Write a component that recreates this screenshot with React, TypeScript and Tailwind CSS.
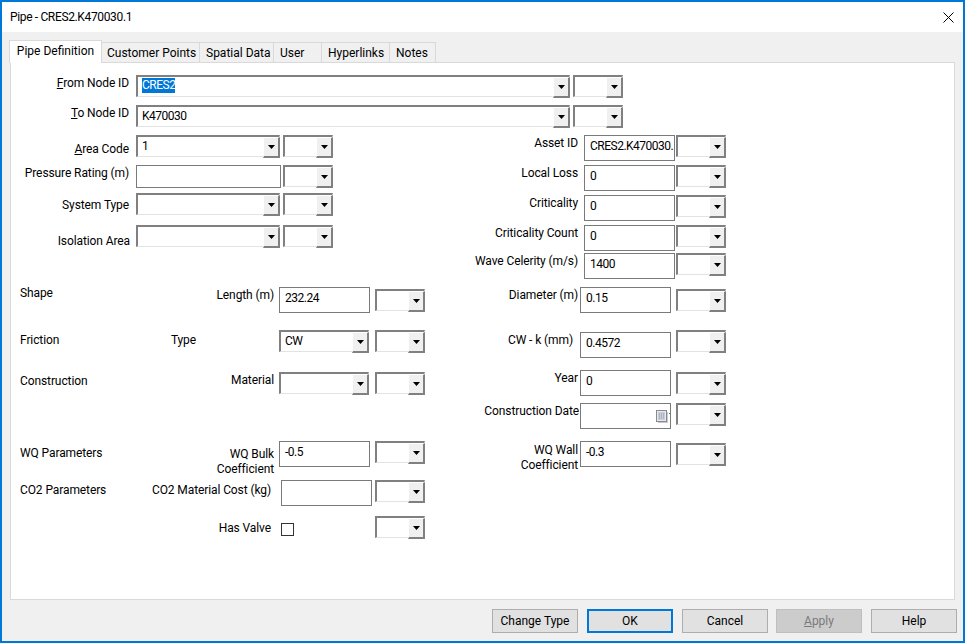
import React from 'react';

const arrow = (
  <svg width="7" height="4" viewBox="0 0 7 4" className="block">
    <path d="M0 0h7L3.500 4z" fill="#000" />
  </svg>
);

// sunken combo box, old win32 look
const Combo: React.FC<{ w: string; value?: string; selected?: boolean; className?: string }> = ({ w, value, selected, className }) => (
  <div className={`flex h-[22px] shrink-0 border-t-2 border-l-2 border-t-[#808080] border-l-[#808080] border-r border-b border-r-[#e3e3e3] border-b-[#e3e3e3] bg-white ${w} ${className ?? ''}`}>
    <div className={`min-w-0 flex-1 overflow-hidden whitespace-nowrap pl-[4px] leading-[15px] tracking-[-0.5px] ${selected ? 'pt-px' : 'pt-[2px]'}`}>
      {selected ? <span className="inline-block bg-[#0078d7] text-white">{value}</span> : value}
    </div>
    <div className="-mb-px -mr-px flex h-[21px] w-[17px] items-center justify-center border-t border-l border-t-white border-l-white border-r-2 border-b-2 border-r-[#808080] border-b-[#808080] bg-[#f0f0f0]">
      {arrow}
    </div>
  </div>
);

const Input: React.FC<{ w?: string; h?: string; value?: string; className?: string; children?: React.ReactNode }> = ({ w = 'w-[91px]', h = 'h-[26px]', value, className, children }) => (
  <div className={`relative shrink-0 overflow-hidden whitespace-nowrap border border-[#7a7a7a] bg-white pl-[5px] pt-[2px] leading-[16px] tracking-[-0.5px] ${w} ${h} ${className ?? ''}`}>
    {value}
    {children}
  </div>
);

const Small: React.FC<{ className?: string }> = ({ className }) => <Combo w="w-[50px]" className={className} />;

const Label: React.FC<{ w: string; className?: string; children: React.ReactNode }> = ({ w, className, children }) => (
  <div className={`shrink-0 pt-px text-right leading-[15px] tracking-[-0.1px] ${w} ${className ?? ''}`}>{children}</div>
);

const Section: React.FC<{ className?: string; children: React.ReactNode }> = ({ className, children }) => (
  <div className={`w-[110px] shrink-0 pl-[9px] pt-px leading-[15px] tracking-[-0.1px] ${className ?? ''}`}>{children}</div>
);

const CalendarIcon = () => (
  <svg width="14" height="13" viewBox="0 0 14 13" className="absolute right-0 top-[6px]">
    <rect x="0.500" y="0.500" width="10" height="11" fill="#e8e8ee" stroke="#8a8a8a" />
    <path d="M2 3h7M2 5h7M2 7h7M2 9h7M3.500 3v6M5.500 3v6M7.500 3v6" stroke="#a9b4c4" strokeWidth="1" />
    <path d="M11.500 2v10.500H2" stroke="#c8c8c8" fill="none" />
    <rect x="13" y="3" width="1" height="1" fill="#3b6ea5" />
  </svg>
);

const tabs = [
  { name: 'Customer Points', cls: 'w-[98px] pl-[5px]' },
  { name: 'Spatial Data', cls: 'w-[74px] pl-[6px]' },
  { name: 'User', cls: 'w-[48px] pl-[6px]' },
  { name: 'Hyperlinks', cls: 'w-[68px] pl-[6px]' },
  { name: 'Notes', cls: 'w-[46px] pl-[6px]' },
];

const btn = 'h-[24px] w-[86px] border border-[#adadad] bg-[#e1e1e1] text-center leading-[22px]';

export default function App() {
  return (
    <div className="flex h-[643px] w-[965px] flex-col overflow-hidden border-2 border-[#0078d7] bg-[#f0f0f0] font-['Roboto',sans-serif] text-[12px] text-black">
      <div className="flex h-[30px] shrink-0 items-center justify-between bg-white pl-2 pr-[9px]">
        <span className="tracking-[-0.35px]">Pipe - CRES2.K470030.1</span>
        <svg width="11" height="11" viewBox="0 0 11 11"><path d="M.5.5l10 10M10.500.5l-10 10" stroke="#000" fill="none" /></svg>
      </div>

      {/* tabs */}
      <div className="ml-[7px] mt-[8px] flex h-[22px] shrink-0 items-end">
        <div className="relative z-10 -mb-px h-[23px] w-[93px] border-x border-t border-[#d9d9d9] bg-white pt-px text-center">Pipe Definition</div>
        {tabs.map((t) => (
          <div key={t.name} className={`h-[20px] border-t border-r border-[#d9d9d9] pt-px leading-[18px] ${t.cls}`}>{t.name}</div>
        ))}
      </div>

      {/* panel */}
      <div className="mx-2 h-[538px] shrink-0 border border-[#d9d9d9] bg-white pt-3">
        <div className="flex">
          <Label w="w-[118px]" className="mr-[7px]"><u>F</u>rom Node ID</Label>
          <Combo w="w-[434px]" value="CRES2" selected />
          <Small className="ml-[3px]" />
        </div>
        <div className="mt-2 flex">
          <Label w="w-[118px]" className="mr-[7px]"><u>T</u>o Node ID</Label>
          <Combo w="w-[434px]" value="K470030" />
          <Small className="ml-[3px]" />
        </div>

        <div className="mt-2 flex">
          {/* left column */}
          <div className="w-[459px] shrink-0">
            <div className="flex h-[22px]">
              <Label w="w-[118px]" className="mr-[7px] mt-[6px]"><u>A</u>rea Code</Label>
              <Combo w="w-[144px]" value="1" />
              <Small className="ml-[3px]" />
            </div>
            <div className="mt-2 flex h-[20px]">
              <Label w="w-[118px]" className="mr-[7px]">Pressure Rating (m)</Label>
              <Input w="w-[145px]" h="h-[23px]" />
              <Small className="ml-[2px]" />
            </div>
            <div className="mt-2 flex h-[22px]">
              <Label w="w-[118px]" className="mr-[7px] mt-[4px]">System Type</Label>
              <Combo w="w-[144px]" />
              <Small className="ml-[3px]" />
            </div>
            <div className="mt-[10px] flex h-[22px]">
              <Label w="w-[119px]" className="mr-[6px] mt-[8px]">Isolation Area</Label>
              <Combo w="w-[144px]" />
              <Small className="ml-[3px]" />
            </div>

            <div className="mt-[40px] flex h-[26px]">
              <Section className="-mt-[2px]">Shape</Section>
              <Label w="w-[153px]" className="mr-[5px]">Length (m)</Label>
              <Input value="232.24" />
              <Small className="ml-[5px] mt-[2px]" />
            </div>
            <div className="mt-[17px] flex h-[22px]">
              <Section className="mt-[2px]">Friction</Section>
              <Label w="w-[75px]" className="mr-[83px] mt-[2px]">Type</Label>
              <Combo w="w-[90px]" value="CW" />
              <Small className="ml-[6px]" />
            </div>
            <div className="mt-[20px] flex h-[22px]">
              <Section className="mt-[1px]">Construction</Section>
              <Label w="w-[153px]" className="mr-[5px]">Material</Label>
              <Combo w="w-[90px]" />
              <Small className="ml-[6px]" />
            </div>
            <div className="mt-[47px] flex h-[26px]">
              <Section className="mt-[4px]">WQ Parameters</Section>
              <Label w="w-[153px]" className="mr-[5px] mt-[5px]">WQ Bulk<br />Coefficient</Label>
              <Input value="-0.5" />
              <Small className="ml-[5px]" />
            </div>
            <div className="mt-[13px] flex h-[26px]">
              <Section className="mt-[2px]">CO2 Parameters</Section>
              <Label w="w-[150px]" className="mr-[10px] mt-[2px]">CO2 Material Cost (kg)</Label>
              <Input />
              <Small className="ml-[3px]" />
            </div>
            <div className="mt-[10px] flex h-[22px]">
              <Label w="w-[260px]" className="mr-[10px] mt-[4px]">Has Valve</Label>
              <div className="mt-[7px] h-[13px] w-[13px] shrink-0 border border-[#333] bg-white" />
              <Small className="ml-[81px]" />
            </div>
          </div>

          {/* right column */}
          <div className="w-[300px] shrink-0">
            <div className="flex h-[26px]">
              <Label w="w-[108px]" className="mr-[6px]">Asset ID</Label>
              <Input value="CRES2.K470030." />
              <Small className="ml-px" />
            </div>
            <div className="mt-1 flex h-[26px]">
              <Label w="w-[108px]" className="mr-[6px]">Local Loss</Label>
              <Input value="0" />
              <Small className="ml-px" />
            </div>
            <div className="mt-1 flex h-[26px]">
              <Label w="w-[108px]" className="mr-[6px]">Criticality</Label>
              <Input value="0" />
              <Small className="ml-px" />
            </div>
            <div className="mt-1 flex h-[26px]">
              <Label w="w-[108px]" className="mr-[6px]">Criticality Count</Label>
              <Input value="0" />
              <Small className="ml-px" />
            </div>
            <div className="mt-[2px] flex h-[26px]">
              <Label w="w-[108px]" className="mr-[6px]">Wave Celerity (m/s)</Label>
              <Input value="1400" />
              <Small className="ml-px" />
            </div>

            <div className="mt-2 flex h-[26px]">
              <Label w="w-[108px]" className="mr-[2px]">Diameter (m)</Label>
              <Input value="0.15" />
              <Small className="ml-[5px] mt-[2px]" />
            </div>
            <div className="mt-[17px] flex h-[28px]">
              <Label w="w-[103px]" className="mr-[7px] mt-[2px]">CW - k (mm)</Label>
              <Input value="0.4572" className="mt-[2px]" />
              <Small className="ml-[5px]" />
            </div>
            <div className="mt-[12px] flex h-[26px]">
              <Label w="w-[108px]" className="mr-[2px]">Year</Label>
              <Input value="0" />
              <Small className="ml-[5px] mt-[2px]" />
            </div>
            <div className="mt-[7px] flex h-[26px]">
              <Label w="w-[109px]" className="mr-px">Construction Date</Label>
              <Input><CalendarIcon /></Input>
              <Small className="ml-[5px]" />
            </div>
            <div className="mt-[12px] flex h-[26px]">
              <Label w="w-[108px]" className="mr-[2px] mt-[1px]">WQ Wall<br />Coefficient</Label>
              <Input value="-0.3" />
              <Small className="ml-[5px] mt-[2px]" />
            </div>
          </div>
        </div>
      </div>

      {/* footer buttons */}
      <div className="mt-[9px] flex justify-end gap-[9px] pr-[6px]">
        <div className={btn}>Change Type</div>
        <div className="h-[24px] w-[86px] border-2 border-[#0078d7] bg-[#e1e1e1] text-center leading-[20px]">OK</div>
        <div className={btn}>Cancel</div>
        <div className="-ml-px h-[24px] w-[86px] border border-[#bfbfbf] bg-[#cccccc] text-center leading-[22px] text-[#7a7a7a]"><u>A</u>pply</div>
        <div className={btn}>Help</div>
      </div>
    </div>
  );
}
